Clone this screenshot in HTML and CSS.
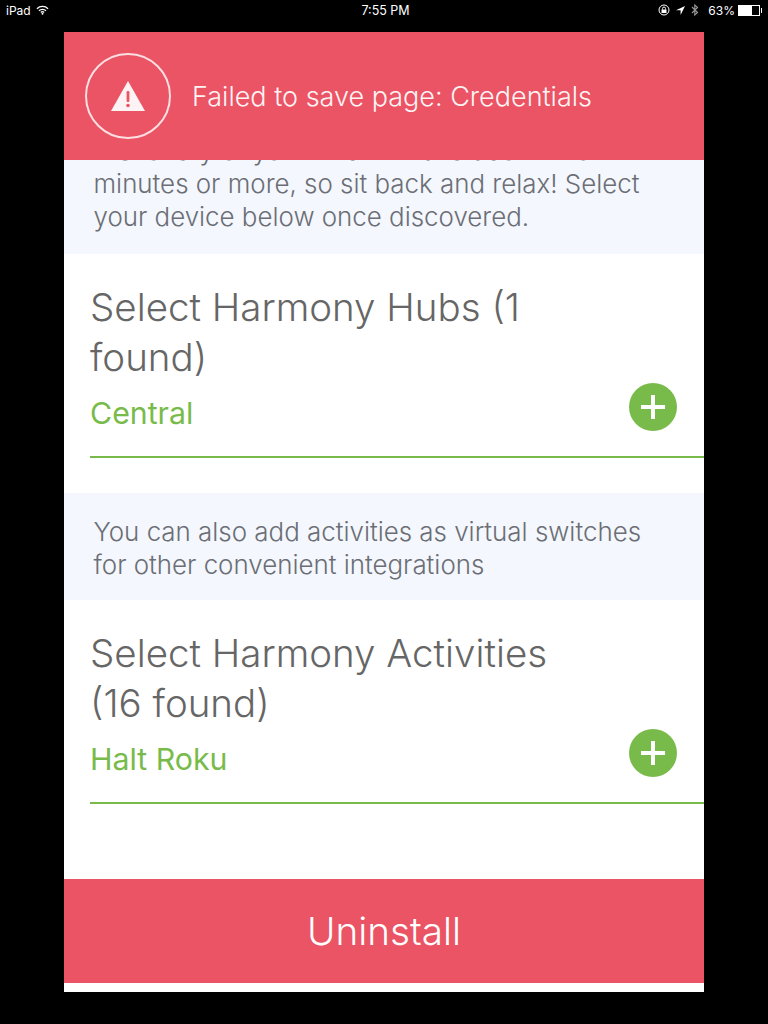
FILE: index.html
```html
<!DOCTYPE html>
<html lang="en">
<head>
    <meta charset="UTF-8">
    <meta name="viewport" content="width=device-width, initial-scale=1.0">
    <title>Harmony Hubs</title>
    <link rel="stylesheet" href="styles.css">
</head>
<body>
    <div class="status-bar">
        <div class="status-left">
            <span>iPad</span>
            <svg class="wifi" width="13" height="10" viewBox="0 0 14 10"><path d="M1 3.6a8.6 8.6 0 0 1 12 0M3.2 5.8a5.4 5.4 0 0 1 7.6 0M5.2 7.7a2.6 2.6 0 0 1 3.6 0" fill="none" stroke="#fff" stroke-width="1.3"/><circle cx="7" cy="9" r="1" fill="#fff"/></svg>
        </div>
        <div class="status-time">7:55 PM</div>
        <div class="status-right">
            <svg class="status-lock" width="12" height="12" viewBox="0 0 12 12"><circle cx="6" cy="6" r="5" fill="none" stroke="#fff"/><rect x="3.5" y="5.5" width="5" height="3.5" fill="#fff"/><path d="M4.5 5.5V4.5a1.5 1.5 0 0 1 3 0v1" fill="none" stroke="#fff"/></svg>
            <svg width="9" height="9" viewBox="0 0 9 9"><path d="M9 0L0 4.2h4.6V9z" fill="#fff"/></svg>
            <svg class="status-bt" width="8" height="12" viewBox="0 0 8 12"><path d="M1 3l5.5 5.5L3.8 11V1l2.7 2.5L1 9" fill="none" stroke="#999" stroke-width="1.1"/></svg>
            <span class="status-pct">63%</span>
            <div class="battery"><div class="battery-level" style="width: 63%"></div></div>
        </div>
    </div>

    <div class="modal">
        <div class="alert">
            <div class="alert-icon">
                <svg width="34" height="30" viewBox="0 0 34 30"><path d="M17 0L34 30H0z" fill="#fdf3f4"/><rect x="15.6" y="10" width="2.8" height="11" rx="1.2" fill="#eb5464"/><circle cx="17" cy="24.5" r="1.8" fill="#eb5464"/></svg>
            </div>
            <div class="alert-text">Failed to save page: Credentials</div>
        </div>

        <div class="content">
            <div class="note note-first">
                <p>Discovery of your hub will take about two minutes or more, so sit back and relax! Select your device below once discovered.</p>
            </div>

            <div class="section">
                <h2>Select Harmony Hubs (1 found)</h2>
                <div class="picker">
                    <span class="picker-value">Central</span>
                    <span class="plus"><svg width="26" height="26" viewBox="0 0 26 26"><path d="M13 1v24M1 13h24" stroke="#fff" stroke-width="4"/></svg></span>
                </div>
            </div>

            <div class="note note-second">
                <p>You can also add activities as virtual switches for other convenient integrations</p>
            </div>

            <div class="section">
                <h2>Select Harmony Activities (16 found)</h2>
                <div class="picker">
                    <span class="picker-value">Halt Roku</span>
                    <span class="plus"><svg width="26" height="26" viewBox="0 0 26 26"><path d="M13 1v24M1 13h24" stroke="#fff" stroke-width="4"/></svg></span>
                </div>
            </div>
        </div>

        <div class="uninstall">Uninstall</div>
    </div>
</body>
</html>
```

FILE: styles.css
```css
body {
    margin: 0;
    background-color: #000;
    font-family: Inter, "Liberation Sans", sans-serif;
    font-weight: 300;
    color: #666;
}
.status-bar {
    height: 20px;
    padding: 0 6px;
    display: grid;
    grid-template-columns: 1fr auto 1fr;
    align-items: center;
    color: #fff;
    font-size: 12px;
    font-weight: 400;
}
.status-left {
    display: flex;
    align-items: center;
    gap: 5px;
}
.status-time {
    font-size: 12.5px;
    padding-left: 3px;
}
.status-right {
    display: flex;
    align-items: center;
    justify-content: flex-end;
    gap: 4px;
}
.status-lock {
    margin-right: 2px;
}
.status-bt {
    margin-left: 2px;
    margin-right: 5px;
}
.status-pct {
    margin-right: -1px;
}
.battery {
    width: 20px;
    height: 9px;
    border: 1px solid #fff;
    margin-right: 2px;
    position: relative;
}
.battery::after {
    content: "";
    position: absolute;
    right: -3px;
    top: 2px;
    width: 1px;
    height: 5px;
    background-color: #fff;
}
.battery-level {
    height: 100%;
    background-color: #fff;
}
.modal {
    width: 640px;
    height: 960px;
    margin: 12px auto 0;
    background-color: #fff;
    display: flex;
    flex-direction: column;
}
.alert {
    height: 128px;
    flex: none;
    background-color: #eb5464;
    display: flex;
    align-items: center;
    padding-left: 21px;
    gap: 21px;
    color: #fdf3f4;
    font-size: 27px;
}
.alert-icon {
    width: 82px;
    height: 82px;
    border: 2px solid #fbdfe2;
    border-radius: 50%;
    display: flex;
    align-items: center;
    justify-content: center;
}
.content {
    flex: 1;
    overflow: hidden;
}
.note {
    background-color: #f4f7fd;
    color: #6b6e75;
    box-sizing: border-box;
    padding: 0 38px 21px 29.5px;
    overflow: hidden;
    display: flex;
    flex-direction: column;
    justify-content: flex-end;
    font-size: 25.9px;
    line-height: 33px;
}
.note p {
    margin: 0;
}
.note-first {
    height: 94px;
}
.note-second {
    height: 107px;
    padding-bottom: 19px;
}
.section {
    padding: 28px 0 0 26px;
    height: 239px;
    box-sizing: border-box;
}
.section h2 {
    margin: 0;
    font-size: 38.5px;
    line-height: 50px;
    font-weight: 300;
    padding-right: 150px;
}
.picker {
    display: flex;
    justify-content: space-between;
    align-items: flex-end;
    border-bottom: 2px solid #79bb4b;
    height: 49px;
    padding: 0 27px 25px 0;
}
.picker-value {
    color: #79bb4b;
    font-size: 30.3px;
    font-weight: 400;
    line-height: 38px;
    margin-bottom: -1px;
}
.plus {
    width: 48px;
    height: 48px;
    border-radius: 50%;
    background-color: #79bb4b;
    display: flex;
    align-items: center;
    justify-content: center;
}
.uninstall {
    height: 104px;
    flex: none;
    margin-bottom: 9px;
    background-color: #eb5464;
    color: #fff;
    display: flex;
    align-items: center;
    justify-content: center;
    font-size: 38.7px;
}
```
